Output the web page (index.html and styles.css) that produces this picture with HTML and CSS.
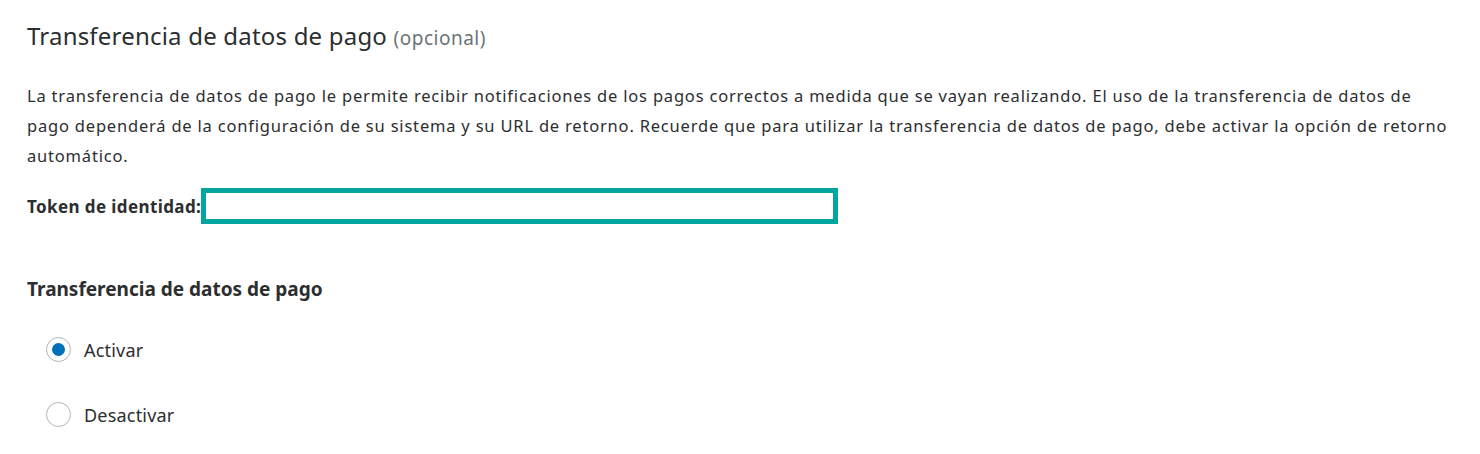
FILE: index.html
```html
<!DOCTYPE html>
<html lang="es">
<head>
<meta charset="utf-8">
<link rel="stylesheet" href="styles.css">
</head>
<body>
<div class="page">
  <h1 class="title">Transferencia de datos de pago <span class="optional">(opcional)</span></h1>
  <p class="desc">La transferencia de datos de pago le permite recibir notificaciones de los pagos correctos a medida que se vayan realizando. El uso de la transferencia de datos de pago dependerá de la configuración de su sistema y su URL de retorno. Recuerde que para utilizar la transferencia de datos de pago, debe activar la opción de retorno automático.</p>
  <div class="token-row">
    <span class="token-label">Token de identidad:</span>
    <span class="token-box"></span>
  </div>
  <h2 class="subtitle">Transferencia de datos de pago</h2>
  <div class="radios">
    <label class="radio-row"><span class="radio checked"></span><span class="radio-text">Activar</span></label>
    <label class="radio-row"><span class="radio"></span><span class="radio-text">Desactivar</span></label>
  </div>
</div>
</body>
</html>
```
FILE: styles.css
```css
html, body {
  margin: 0;
  padding: 0;
  background: #ffffff;
}
body {
  font-family: "Noto Sans", "Open Sans", sans-serif;
  color: #2c2e2f;
}
.page {
  padding: 18px 26px 0 27px;
}
.title {
  margin: 0;
  font-size: 24px;
  font-weight: 400;
  line-height: 36px;
  letter-spacing: 0.2px;
}
.optional {
  font-size: 19px;
  letter-spacing: 0.5px;
  color: #6c7378;
}
.desc {
  margin: 25px 0 0 0;
  font-size: 16.5px;
  line-height: 30px;
  letter-spacing: 0.8px;
}
.token-row {
  display: flex;
  align-items: center;
  margin-top: 17px;
}
.token-label {
  font-size: 17px;
  font-weight: 700;
  letter-spacing: 0.4px;
}
.token-box {
  display: block;
  width: 627px;
  height: 26px;
  border: 5px solid #03a69e;
}
.subtitle {
  margin: 52px 0 0 0;
  font-size: 19px;
  font-weight: 700;
  line-height: 26px;
}
.radios {
  display: flex;
  flex-direction: column;
  gap: 40px;
  margin-top: 35px;
  padding-left: 19px;
}
.radio-row {
  display: flex;
  align-items: center;
  gap: 13px;
  height: 25px;
}
.radio {
  box-sizing: border-box;
  width: 25px;
  height: 25px;
  border-radius: 50%;
  border: 1px solid #b1b5b8;
  background: #fff;
  display: flex;
  align-items: center;
  justify-content: center;
}
.radio.checked::after {
  content: "";
  width: 13px;
  height: 13px;
  border-radius: 50%;
  background: #0070ba;
}
.radio-text {
  font-size: 18px;
  letter-spacing: 0.2px;
}
```
